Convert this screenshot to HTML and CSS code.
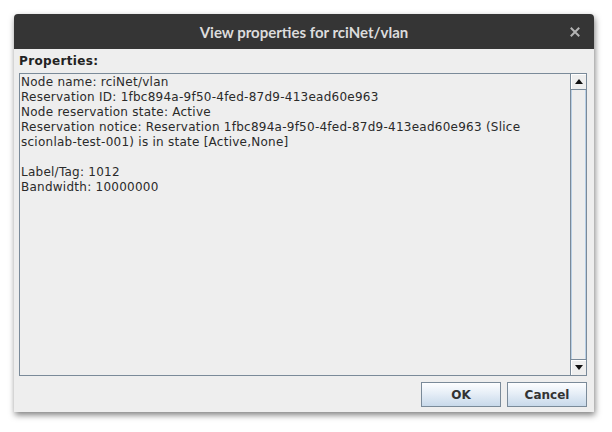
FILE: index.html
```html
<!DOCTYPE html>
<html lang="en">
<head>
    <meta charset="UTF-8">
    <title>View properties for rciNet/vlan</title>
    <link rel="stylesheet" href="styles.css">
</head>
<body>
    <div class="dialog">
        <!-- Title bar -->
        <div class="titlebar">
            <span class="title">View properties for rciNet/vlan</span>
            <span class="close">
                <svg width="10" height="10" viewBox="0 0 10 10">
                    <path d="M1.5 1.5 L8.5 8.5 M8.5 1.5 L1.5 8.5" stroke="#b4b4b4" stroke-width="2" stroke-linecap="square"/>
                </svg>
            </span>
        </div>

        <div class="content">
            <div class="props-label">Properties:</div>

            <div class="text-area">
                <div class="text-body">
                    <div>Node name: rciNet/vlan</div>
                    <div>Reservation ID: 1fbc894a-9f50-4fed-87d9-413ead60e963</div>
                    <div>Node reservation state: Active</div>
                    <div>Reservation notice: Reservation 1fbc894a-9f50-4fed-87d9-413ead60e963 (Slice</div>
                    <div>scionlab-test-001) is in state [Active,None]</div>
                    <div>&nbsp;</div>
                    <div>Label/Tag: 1012</div>
                    <div>Bandwidth: 10000000</div>
                </div>
                <div class="scrollbar">
                    <div class="scroll-btn">
                        <svg width="8" height="5" viewBox="0 0 8 5"><path d="M0 5 L4 0 L8 5 Z" fill="#111"/></svg>
                    </div>
                    <div class="scroll-track"></div>
                    <div class="scroll-btn">
                        <svg width="8" height="5" viewBox="0 0 8 5"><path d="M0 0 L8 0 L4 5 Z" fill="#111"/></svg>
                    </div>
                </div>
            </div>

            <div class="buttons">
                <button class="btn">OK</button>
                <button class="btn">Cancel</button>
            </div>
        </div>
    </div>
</body>
</html>
```

FILE: styles.css
```css
body {
    margin: 0;
    background: #ffffff;
    font-family: "DejaVu Sans", sans-serif;
}

html, body {
    width: 612px;
    height: 432px;
    overflow: hidden;
}

.dialog {
    margin: 14px 0 0 14px;
    width: 580px;
    height: 398px;
    display: flex;
    flex-direction: column;
    background: #eeeeee;
    border-radius: 4px 4px 0 0;
    box-shadow: 1px 3px 6px rgba(0, 0, 0, 0.5);
}

.titlebar {
    height: 35px;
    flex: 0 0 35px;
    background: #353535;
    border-radius: 4px 4px 0 0;
    display: flex;
    align-items: center;
    justify-content: center;
    position: relative;
}

.title {
    font-family: Lato, sans-serif;
    font-weight: 700;
    font-size: 15px;
    color: #dcdcdc;
}

.close {
    position: absolute;
    right: 14px;
    top: 13px;
    width: 10px;
    height: 10px;
    display: flex;
}

.content {
    flex: 1;
    display: flex;
    flex-direction: column;
    padding: 4px 7px 5px 5px;
}

.props-label {
    height: 20px;
    font-weight: bold;
    font-size: 12px;
    letter-spacing: 0.35px;
    color: #222;
    line-height: 16px;
}

.text-area {
    flex: 1;
    display: flex;
    border: 1px solid #7a8a99;
    background: #eeeeee;
    min-height: 0;
}

.text-body {
    flex: 1;
    padding: 1px 1px;
    font-size: 12px;
    letter-spacing: 0.25px;
    line-height: 15px;
    color: #2a2a2a;
}

.scrollbar {
    width: 15px;
    display: flex;
    flex-direction: column;
    border-left: 1px solid #7a8a99;
}

.scroll-btn {
    height: 15px;
    flex: 0 0 15px;
    display: flex;
    align-items: center;
    justify-content: center;
    background: #eeeeee;
    box-shadow: inset 1px 1px 0 #ffffff;
    border-bottom: 1px solid #7a8a99;
}

.scroll-btn:last-child {
    border-bottom: none;
    border-top: 1px solid #7a8a99;
}

.scroll-track {
    flex: 1;
    background: #eeeeee;
    border-left: 1px solid #b8cfe5;
    border-right: 1px solid #b8cfe5;
}

.buttons {
    display: flex;
    justify-content: flex-end;
    gap: 6px;
    margin-top: 6px;
}

.btn {
    width: 80px;
    height: 25px;
    border: 1px solid #7a8a99;
    background: linear-gradient(#fdfeff, #e6eef7 45%, #c8d9ea);
    font-family: "DejaVu Sans", sans-serif;
    font-weight: bold;
    font-size: 12px;
    color: #333;
    padding: 0;
}
```
